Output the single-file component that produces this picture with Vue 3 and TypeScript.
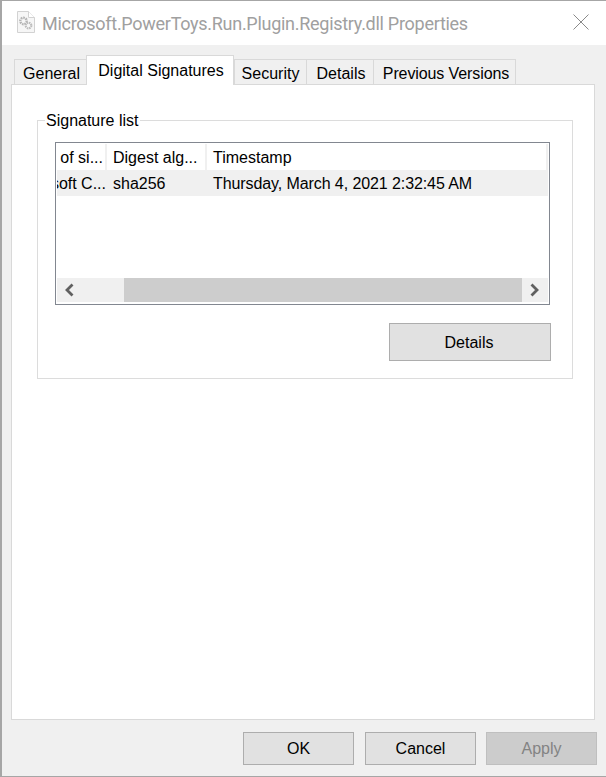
<script setup lang="ts">
const tabs = [
  { label: 'General', width: 72, active: false },
  { label: 'Digital Signatures', width: 148, active: true },
  { label: 'Security', width: 72, active: false },
  { label: 'Details', width: 67, active: false },
  { label: 'Previous Versions', width: 143, active: false },
]
</script>

<template>
  <div class="window">
    <header class="titlebar">
      <svg class="file-icon" width="18" height="22" viewBox="0 0 18 22">
        <path d="M.5.5h11l6 6v15H.5z" fill="#f6f6f6" stroke="#d2d2d2" />
        <path d="M11.5.5v6h6" fill="#fff" stroke="#d2d2d2" />
        <circle cx="6.5" cy="10" r="3.2" fill="none" stroke="#b4b4b4" stroke-width="2.4" stroke-dasharray="1.6 .8" />
        <circle cx="11.5" cy="14.5" r="2.8" fill="none" stroke="#bcbcbc" stroke-width="2.2" stroke-dasharray="1.5 .7" />
      </svg>
      <span class="title">Microsoft.PowerToys.Run.Plugin.Registry.dll Properties</span>
      <svg class="close" width="16" height="16" viewBox="0 0 16 16">
        <path d="M.5.5l15 15M15.500.5l-15 15" stroke="#8a8a8a" stroke-width="1" fill="none" />
      </svg>
    </header>

    <main class="client">
      <nav class="tabs">
        <div
          v-for="tab in tabs"
          :key="tab.label"
          class="tab"
          :class="{ active: tab.active }"
          :style="{ width: tab.width + 'px' }"
        >{{ tab.label }}</div>
      </nav>

      <section class="panel">
        <fieldset class="group">
          <legend>Signature list</legend>
          <div class="list">
            <div class="row head">
              <div class="cell first"><span>Name of si...</span></div>
              <div class="cell second">Digest alg...</div>
              <div class="cell third">Timestamp</div>
            </div>
            <div class="row item">
              <div class="cell first"><span>Microsoft C...</span></div>
              <div class="cell second">sha256</div>
              <div class="cell third stamp">Thursday, March 4, 2021 2:32:45 AM</div>
            </div>
            <div class="spacer"></div>
            <div class="scrollbar">
              <div class="arrow">
                <svg width="12" height="14" viewBox="0 0 12 14"><path d="M9.500 1.500 4 7l5.500 5.500" fill="none" stroke="#606060" stroke-width="2.800" /></svg>
              </div>
              <div class="thumb"></div>
              <div class="arrow">
                <svg width="12" height="14" viewBox="0 0 12 14"><path d="M1.500 1.500 7 7l-5.500 5.500" fill="none" stroke="#606060" stroke-width="2.800" /></svg>
              </div>
            </div>
          </div>
          <div class="details-row">
            <button class="btn details">Details</button>
          </div>
        </fieldset>
      </section>

      <footer class="actions">
        <button class="btn">OK</button>
        <button class="btn">Cancel</button>
        <button class="btn disabled">Apply</button>
      </footer>
    </main>
  </div>
</template>

<style>
html, body { margin: 0; background: #f0f0f0; }
</style>

<style scoped>
.window {
  box-sizing: border-box;
  width: 606px;
  height: 777px;
  display: flex;
  flex-direction: column;
  border-top: 1px solid #a6a6a6;
  border-bottom: 1px solid #a6a6a6;
  border-left: 2px solid #a6a6a6;
  font-family: "Liberation Sans", Arial, sans-serif;
  font-size: 16px;
  color: #000;
  background: #f0f0f0;
}
.titlebar {
  height: 44px;
  flex: none;
  background: #fff;
  display: flex;
  align-items: center;
  padding-left: 15px;
}
.file-icon { margin-right: 7px; margin-top: -2px; }
.title {
  font-family: Roboto, sans-serif;
  font-size: 18px;
  letter-spacing: -0.28px;
  color: #a0a0a0;
  white-space: nowrap;
}
.close { margin-left: auto; margin-right: 17px; margin-top: -3px; }
.client {
  flex: 1;
  display: flex;
  flex-direction: column;
  padding: 10px 9px 0 9px;
  min-height: 0;
}
.tabs {
  display: flex;
  align-items: flex-end;
  height: 29px;
  padding-left: 3px;
  position: relative;
  z-index: 1;
}
.tab {
  box-sizing: border-box;
  height: 25px;
  padding-left: 2px;
  border: 1px solid #d9d9d9;
  border-bottom: none;
  border-right: none;
  background: #f0f0f0;
  text-align: center;
  line-height: 28px;
  white-space: nowrap;
}
.tab:nth-child(3) { padding-left: 0; }
.tab:nth-child(5) { border-right: 1px solid #d9d9d9; letter-spacing: -0.1px; padding-left: 3px; }
.tab.active {
  height: 30px;
  background: #fff;
  border-right: 1px solid #d9d9d9;
  line-height: 29px;
  margin-bottom: -1px;
}
.panel {
  box-sizing: border-box;
  width: 584px;
  height: 636px;
  background: #fff;
  border: 1px solid #d9d9d9;
  padding: 25px 21px 0 25px;
}
.group {
  box-sizing: border-box;
  margin: 0;
  width: 536px;
  height: 269px;
  border: 1px solid #dcdcdc;
  padding: 12px 21px 0 17px;
}
legend {
  padding: 2px 1px 0;
  margin-left: -10px;
  line-height: 18px;
}
.list {
  box-sizing: border-box;
  width: 495px;
  height: 163px;
  border: 1px solid #828790;
  display: flex;
  flex-direction: column;
  padding: 0 1px 2px;
}
.row { display: flex; flex: none; }
.head { height: 27px; }
.item { height: 26px; background: #f0f0f0; }
.cell {
  box-sizing: border-box;
  height: 26px;
  line-height: 26px;
  white-space: nowrap;
  overflow: hidden;
  padding: 1px 0 0 6px;
}
.head .cell { border-right: 2px solid #f0f0f0; margin-top: 1px; }
.first {
  width: 50px;
  display: flex;
  justify-content: flex-end;
  padding: 1px 1px 0 0;
}
.head .first { padding-right: 2px; }
.first span { flex: none; }
.second { width: 100px; }
.third { flex: 1; }
.stamp { letter-spacing: -0.09px; }
.spacer { flex: 1; }
.scrollbar {
  display: flex;
  flex: none;
  height: 24px;
  background: #f0f0f0;
}
.arrow {
  width: 24px;
  display: flex;
  align-items: center;
  justify-content: center;
  flex: none;
}
.thumb {
  margin-left: 43px;
  width: 398px;
  background: #cdcdcd;
}
.arrow:last-child { margin-left: auto; }
.details-row {
  display: flex;
  justify-content: flex-end;
  margin-top: 18px;
}
.btn {
  box-sizing: border-box;
  width: 111px;
  height: 33px;
  padding: 0;
  border: 1px solid #adadad;
  background: #e1e1e1;
  font: inherit;
  color: #000;
}
.btn.details { width: 162px; height: 38px; padding-top: 1px; padding-right: 2px; }
.btn.disabled { background: #cccccc; border-color: #bfbfbf; color: #838383; }
.actions {
  display: flex;
  justify-content: flex-end;
  gap: 11px;
  margin-top: 12px;
}
.actions .btn:last-child { margin-left: -1px; }
</style>
